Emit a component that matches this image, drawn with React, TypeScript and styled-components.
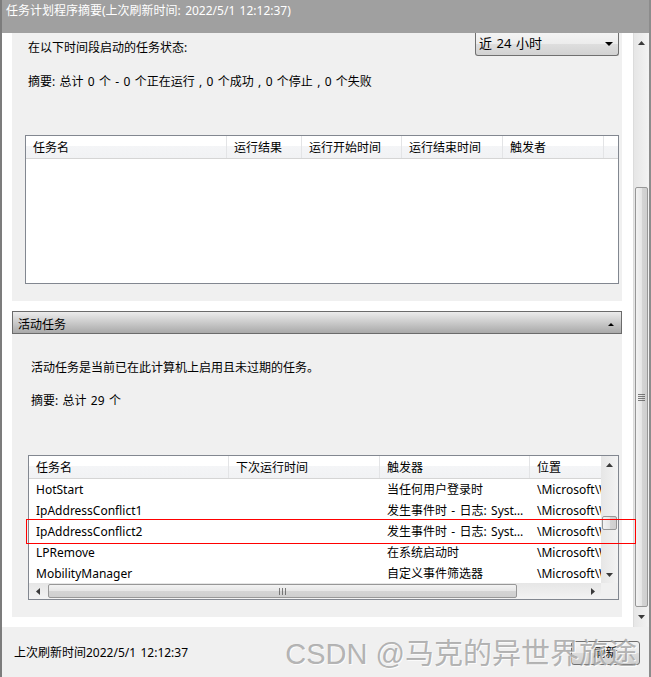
import styled, { createGlobalStyle } from 'styled-components';

type Dir = 'up' | 'down' | 'left' | 'right';

const GlobalStyle = createGlobalStyle`
  html, body {
    margin: 0;
    padding: 0;
    background: #fff;
  }
  body {
    width: 651px;
    height: 677px;
    overflow: hidden;
    font-family: "Noto Sans", "Noto Sans CJK SC", sans-serif;
    font-size: 12px;
    line-height: 15px;
    word-spacing: 1.2px;
    color: #000;
  }
`;

const Arrow = ({ dir, size = 7, color = '#3a3a3a' }: { dir: Dir; size?: number; color?: string }) => {
  const h = Math.ceil(size / 2);
  const vertical = dir === 'up' || dir === 'down';
  const pts = {
    up: `0,${h} ${size / 2},0 ${size},${h}`,
    down: `0,0 ${size / 2},${h} ${size},0`,
    left: `${h},0 0,${size / 2} ${h},${size}`,
    right: `0,0 ${h},${size / 2} 0,${size}`,
  }[dir];
  const w = vertical ? size : h;
  const ht = vertical ? h : size;
  return (
    <svg width={w} height={ht} viewBox={`0 0 ${w} ${ht}`}>
      <polygon points={pts} fill={color} />
    </svg>
  );
};

const activeTasks = [
  { name: 'HotStart', next: '', trigger: '当任何用户登录时', path: '\\Microsoft\\Windows\\HotStart' },
  { name: 'IpAddressConflict1', next: '', trigger: '发生事件时 - 日志: System, 源: Tcpip', path: '\\Microsoft\\Windows\\Ras' },
  { name: 'IpAddressConflict2', next: '', trigger: '发生事件时 - 日志: System, 源: Dhcp', path: '\\Microsoft\\Windows\\Ras' },
  { name: 'LPRemove', next: '', trigger: '在系统启动时', path: '\\Microsoft\\Windows\\MUI' },
  { name: 'MobilityManager', next: '', trigger: '自定义事件筛选器', path: '\\Microsoft\\Windows\\Ras' },
];

export default function App() {
  return (
    <>
      <GlobalStyle />
      <Window>
        <TitleBar>任务计划程序摘要(上次刷新时间: 2022/5/1 12:12:37)</TitleBar>
        <Body>
          <Content>
            <Panel $height={268}>
              <TopRow>
                <Label>在以下时间段启动的任务状态:</Label>
                <Dropdown>
                  <span>近 24 小时</span>
                  <Arrow dir="down" size={8} color="#000" />
                </Dropdown>
              </TopRow>
              <Text $indent={16} $top={18}>
                摘要: 总计 0 个 - 0 个正在运行 , 0 个成功 , 0 个停止 , 0 个失败
              </Text>
              <ListView $left={13} $top={46} $height={149}>
                <Header $cols="201px 75px 100px 101px 101px 1fr">
                  <HeaderCell>任务名</HeaderCell>
                  <HeaderCell>运行结果</HeaderCell>
                  <HeaderCell>运行开始时间</HeaderCell>
                  <HeaderCell>运行结束时间</HeaderCell>
                  <HeaderCell>触发者</HeaderCell>
                  <HeaderCell $last />
                </Header>
              </ListView>
            </Panel>

            <SectionHeader>
              <span>活动任务</span>
              <Arrow dir="up" size={6} color="#000" />
            </SectionHeader>

            <Panel $height={283}>
              <Text $indent={19} $top={26}>活动任务是当前已在此计算机上启用且未过期的任务。</Text>
              <Text $indent={19} $top={18}>摘要: 总计 29 个</Text>
              <ListView $left={16} $top={47} $height={145}>
                <ListGrid>
                  <ListArea>
                    <Header $cols="200px 151px 150px 200px">
                      <HeaderCell>任务名</HeaderCell>
                      <HeaderCell>下次运行时间</HeaderCell>
                      <HeaderCell>触发器</HeaderCell>
                      <HeaderCell>位置</HeaderCell>
                    </Header>
                    {activeTasks.map((t) => (
                      <Row key={t.name}>
                        <Cell>{t.name}</Cell>
                        <Cell>{t.next}</Cell>
                        <Cell>{t.trigger}</Cell>
                        <Cell $clip>{t.path}</Cell>
                      </Row>
                    ))}
                  </ListArea>
                  <VScroll>
                    <ScrollButton $h={17}>
                      <Arrow dir="up" />
                    </ScrollButton>
                    <Track>
                      <Thumb $offset={43} $size={14} />
                    </Track>
                    <ScrollButton $h={17}>
                      <Arrow dir="down" />
                    </ScrollButton>
                  </VScroll>
                  <HScroll>
                    <ScrollButton $w={17}>
                      <Arrow dir="left" />
                    </ScrollButton>
                    <HTrack>
                      <HThumb $offset={2} $size={469}>
                        <Grip $vertical />
                      </HThumb>
                    </HTrack>
                    <ScrollButton $w={17}>
                      <Arrow dir="right" />
                    </ScrollButton>
                  </HScroll>
                  <Corner />
                </ListGrid>
              </ListView>
            </Panel>
          </Content>

          <OuterScroll>
            <ScrollButton $h={20}>
              <Arrow dir="up" />
            </ScrollButton>
            <Track>
              <Thumb $offset={134} $size={420}>
                <Grip />
              </Thumb>
            </Track>
            <ScrollButton $h={20}>
              <Arrow dir="down" />
            </ScrollButton>
          </OuterScroll>
        </Body>

        <StatusBar>
          <span>上次刷新时间2022/5/1 12:12:37</span>
          <Button>刷新</Button>
        </StatusBar>

        <Highlight />
        <Watermark>CSDN @马克的异世界旅途</Watermark>
      </Window>
    </>
  );
}

const Window = styled.div`
  position: relative;
  width: 651px;
  height: 677px;
  box-sizing: border-box;
  border-left: 2px solid #7c7c7c;
  border-right: 2px solid #8c8c8c;
  display: flex;
  flex-direction: column;
  overflow: hidden;
`;

const TitleBar = styled.div`
  height: 33px;
  flex-shrink: 0;
  box-sizing: border-box;
  padding: 3px 0 0 4px;
  background: #a0a0a0;
  color: #fff;
`;

const Body = styled.div`
  height: 594px;
  flex-shrink: 0;
  display: flex;
  background: #fff;
`;

const Content = styled.div`
  width: 610px;
  margin-left: 10px;
  display: flex;
  flex-direction: column;
  overflow: hidden;
`;

const Panel = styled.div<{ $height: number }>`
  height: ${(p) => p.$height}px;
  flex-shrink: 0;
  background: #f0f0f0;
  display: flex;
  flex-direction: column;
`;

const TopRow = styled.div`
  height: 23px;
  display: flex;
  justify-content: space-between;
  align-items: flex-start;
  padding: 0 3px 0 16px;
`;

const Label = styled.div`
  margin-top: 7px;
`;

const Dropdown = styled.div`
  width: 144px;
  height: 23px;
  box-sizing: border-box;
  border: 1px solid #707070;
  border-top: none;
  border-radius: 0 0 3px 3px;
  background: linear-gradient(#f4f4f4 0%, #ececec 50%, #dedede 50%, #d2d2d2 100%);
  display: flex;
  align-items: center;
  justify-content: space-between;
  padding: 0 5px 1px 3px;
  font-size: 13px;
`;

const Text = styled.div<{ $indent: number; $top: number }>`
  padding-left: ${(p) => p.$indent}px;
  margin-top: ${(p) => p.$top}px;
`;

const ListView = styled.div<{ $left: number; $top: number; $height: number }>`
  margin: ${(p) => p.$top}px 3px 0 ${(p) => p.$left}px;
  height: ${(p) => p.$height}px;
  box-sizing: border-box;
  border: 1px solid #828790;
  background: #fff;
  overflow: hidden;
`;

const Header = styled.div<{ $cols: string }>`
  display: grid;
  grid-template-columns: ${(p) => p.$cols};
  height: 23px;
  box-sizing: border-box;
  border-bottom: 1px solid #d5d5d5;
  background: linear-gradient(#ffffff 0%, #ffffff 45%, #f4f5f7 45%, #f1f2f4 100%);
`;

const HeaderCell = styled.div<{ $last?: boolean }>`
  height: 22px;
  line-height: 23px;
  padding-left: 7px;
  border-right: ${(p) => (p.$last ? 'none' : '1px solid #e3e4e6')};
  white-space: nowrap;
  overflow: hidden;
`;

const ListGrid = styled.div`
  display: grid;
  grid-template-columns: 572px 17px;
  grid-template-rows: 127px 16px;
  height: 100%;
`;

const ListArea = styled.div`
  overflow: hidden;
  width: 572px;
`;

const Row = styled.div`
  display: grid;
  grid-template-columns: 200px 151px 150px 200px;
  height: 21px;
  line-height: 21px;
`;

const Cell = styled.div<{ $clip?: boolean }>`
  padding: 0 5px 0 7px;
  white-space: nowrap;
  overflow: hidden;
  text-overflow: ${(p) => (p.$clip ? 'clip' : 'ellipsis')};
`;

const VScroll = styled.div`
  display: flex;
  flex-direction: column;
  background: linear-gradient(to right, #e6e6e6, #f3f3f3);
`;

const OuterScroll = styled(VScroll)`
  width: 16px;
  margin-left: 11px;
  border-left: 1px solid #dcdcdc;
  box-sizing: border-box;
`;

const ScrollButton = styled.div<{ $h?: number; $w?: number }>`
  flex-shrink: 0;
  height: ${(p) => (p.$h ? `${p.$h}px` : 'auto')};
  width: ${(p) => (p.$w ? `${p.$w}px` : 'auto')};
  display: flex;
  align-items: center;
  justify-content: center;
`;

const Track = styled.div`
  flex: 1;
  display: flex;
  flex-direction: column;
  align-items: center;
`;

const Thumb = styled.div<{ $offset: number; $size: number }>`
  margin-top: ${(p) => p.$offset}px;
  height: ${(p) => p.$size}px;
  width: calc(100% - 2px);
  box-sizing: border-box;
  border: 1px solid #979797;
  border-radius: 2px;
  background: linear-gradient(to right, #f3f3f3, #e6e6e6 50%, #d4d4d4 51%, #cfcfcf);
  display: flex;
  align-items: center;
  justify-content: center;
`;

const HScroll = styled.div`
  display: flex;
  background: linear-gradient(#e6e6e6, #f3f3f3);
`;

const HTrack = styled.div`
  flex: 1;
  display: flex;
  align-items: center;
`;

const HThumb = styled.div<{ $offset: number; $size: number }>`
  margin-left: ${(p) => p.$offset}px;
  width: ${(p) => p.$size}px;
  height: 14px;
  box-sizing: border-box;
  border: 1px solid #979797;
  border-radius: 2px;
  background: linear-gradient(#f3f3f3, #e6e6e6 50%, #d4d4d4 51%, #cfcfcf);
  display: flex;
  align-items: center;
  justify-content: center;
`;

const Grip = styled.div<{ $vertical?: boolean }>`
  width: 7px;
  height: 7px;
  background: ${(p) =>
    p.$vertical
      ? 'repeating-linear-gradient(to right, #555 0 1px, transparent 1px 3px)'
      : 'repeating-linear-gradient(#555 0 1px, transparent 1px 2px)'};
  opacity: 0.75;
`;

const Corner = styled.div`
  background: #f0f0f0;
`;

const SectionHeader = styled.div`
  margin-top: 10px;
  height: 23px;
  flex-shrink: 0;
  box-sizing: border-box;
  border: 1px solid #6b6b6b;
  background: linear-gradient(#ececec, #a9a9a9);
  display: flex;
  align-items: center;
  justify-content: space-between;
  padding: 3px 7px 0 5px;
`;

const StatusBar = styled.div`
  flex: 1;
  background: #f0f0f0;
  display: flex;
  align-items: center;
  justify-content: space-between;
  padding-left: 12px;
`;

const Button = styled.div`
  width: 69px;
  height: 24px;
  margin-right: 9px;
  margin-top: 1px;
  box-sizing: border-box;
  border: 1px solid #707070;
  border-radius: 3px;
  background: linear-gradient(#f2f2f2, #ebebeb 50%, #dddddd 50%, #cfcfcf);
  display: flex;
  align-items: center;
  justify-content: center;
`;

const Highlight = styled.div`
  position: absolute;
  left: 24px;
  top: 519px;
  width: 608px;
  height: 23px;
  border: 1px solid #ff0000;
  pointer-events: none;
`;

const Watermark = styled.div`
  position: absolute;
  right: 12px;
  bottom: 6px;
  font-family: "Liberation Sans", "Noto Sans CJK SC", sans-serif;
  font-size: 29px;
  line-height: 34px;
  word-spacing: 0;
  color: rgba(140, 140, 140, 0.65);
  text-shadow: 1px 1px 0 rgba(255, 255, 255, 0.8);
  white-space: nowrap;
  pointer-events: none;
`;
